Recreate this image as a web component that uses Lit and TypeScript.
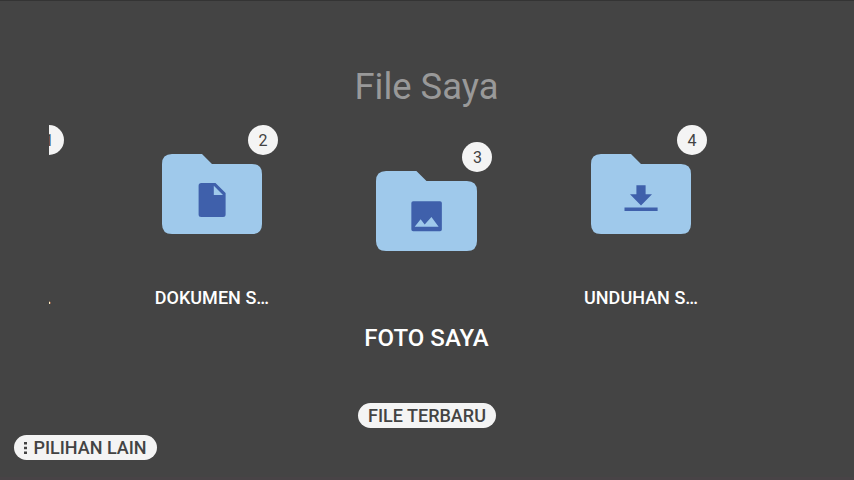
import { LitElement, html, svg, css, type TemplateResult } from "lit";
import { customElement, property } from "lit/decorators.js";
import { classMap } from "lit/directives/class-map.js";

type Kind = "apps" | "doc" | "photo" | "download";

const glyphs: Record<Kind, TemplateResult> = {
  apps: svg``,
  doc: svg`<path fill-rule="evenodd" d="M39.3 29H53.5L63.6 39V60.5Q63.6 63 61.1 63H39.1Q36.6 63 36.6 60.5V31.7Q36.6 29 39.3 29ZM51.8 31.7V41H61Z"/>`,
  photo: svg`<path fill-rule="evenodd" d="M36.8 30.3H63.4Q65.2 30.3 65.2 32.1V58.4Q65.2 60.2 63.4 60.2H36.8Q35 60.2 35 58.4V32.1Q35 30.3 36.8 30.3ZM38.3 55.7H62L54.9 46L48.2 53.6L44.2 48.2Z"/>`,
  download: svg`<path d="M45.4 31.2H54.6V40.3H61L50 51.4L39 40.3H45.4ZM33.5 53.6H66.6V57H33.5Z"/>`,
};

@customElement("folder-card")
class FolderCard extends LitElement {
  @property() kind: Kind = "doc";
  @property() label = "";
  @property({ type: Number }) count = 0;
  @property({ type: Boolean }) active = false;

  static styles = css`
    :host { flex: 0 0 214.6px; display: block; }
    .card { display: flex; flex-direction: column; align-items: center; }
    .card.active { padding-top: 16.6px; }
    .badge {
      width: 30px; height: 30px; border-radius: 50%; margin-left: 102px;
      background: #f4f4f4; color: #434343; text-align: center;
      font: 400 16px/31px Roboto, sans-serif;
    }
    svg { display: block; width: 100px; height: 80px; margin-top: -1px; }
    .active svg { width: 101px; }
    .base { fill: #9fc9eb; }
    .glyph { fill: #3f60ab; }
    .label {
      margin-top: 53px; color: #fff; white-space: nowrap;
      font: 500 18px/22px Roboto, sans-serif; letter-spacing: 0.03px;
    }
    .active .label { margin-top: 72px; font-size: 24px; line-height: 30px; }
  `;

  render() {
    return html`<div class=${classMap({ card: true, active: this.active })}>
      <div class="badge">${this.count}</div>
      <svg viewBox="0 0 100 80" preserveAspectRatio="none">
        <path class="base" d="M10 0H40L50 10H90Q100 10 100 20V70Q100 80 90 80H10Q0 80 0 70V10Q0 0 10 0Z"/>
        <g class="glyph">${glyphs[this.kind]}</g>
      </svg>
      <div class="label">${this.label}</div>
    </div>`;
  }
}

@customElement("app-root")
class AppRoot extends LitElement {
  static styles = css`
    :host {
      display: flex; flex-direction: column; box-sizing: border-box;
      width: 854px; height: 480px; overflow: hidden; background: #444;
      border-top: 1px solid #343434; border-bottom: 3px solid #484346;
      font-family: Roboto, sans-serif;
    }
    h1 {
      margin: 64px 1px 0 0; text-align: center; color: #999;
      font-weight: 400; font-size: 36.4px; line-height: 44px;
    }
    .carousel { display: flex; height: 230px; margin: 16px 49px 0; overflow: hidden; }
    .track { display: flex; margin-left: -159px; }
    .first { margin: 0 -1px 0 1px; }
    .pill {
      display: flex; align-items: center; justify-content: center; box-sizing: border-box;
      height: 25px; border-radius: 13px; background: #f4f4f4; color: #434343;
      font-size: 18px; font-weight: 500; line-height: 25px; white-space: nowrap;
    }
    .recent { width: 138px; margin: 48px auto 0; }
    .more { width: 143px; margin: 7px 0 0 14px; gap: 6px; }
    .dots { width: 3px; height: 12px; fill: #434343; }
  `;

  render() {
    return html`
      <h1>File Saya</h1>
      <div class="carousel">
        <div class="track">
          <folder-card class="first" kind="apps" label="APLIKASI S…" .count=${1}></folder-card>
          <folder-card kind="doc" label="DOKUMEN S…" .count=${2}></folder-card>
          <folder-card kind="photo" label="FOTO SAYA" .count=${3} active></folder-card>
          <folder-card kind="download" label="UNDUHAN S…" .count=${4}></folder-card>
        </div>
      </div>
      <div class="pill recent">FILE TERBARU</div>
      <div class="pill more">
        <svg class="dots" viewBox="0 0 3 12"><path d="M0 0H3V2.6H0ZM0 4.7H3V7.3H0ZM0 9.4H3V12H0Z"/></svg>
        <span>PILIHAN LAIN</span>
      </div>
    `;
  }
}
